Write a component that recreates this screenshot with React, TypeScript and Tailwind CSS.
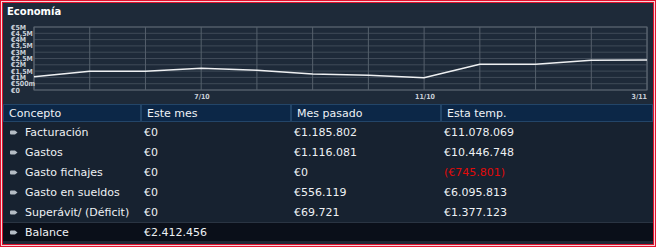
import React from 'react';

const FONT = { fontFamily: '"DejaVu Sans", Verdana, sans-serif' };

const yLabels = ['€5M', '€4,5M', '€4M', '€3,5M', '€3M', '€2,5M', '€2M', '€1,5M', '€1M', '€500m', '€0'];

// page coords of the line, measured off the chart
const points: [number, number][] = [
  [34, 76.7], [89.7, 71.3], [145.5, 71.3], [201.2, 68.3], [257, 70.3], [312.6, 74],
  [368.4, 75.3], [424, 77.7], [479.8, 64.3], [535.6, 64.3], [591.3, 60.3], [647, 60],
];

const rows = [
  { label: 'Facturación', mes: '€0', pasado: '€1.185.802', temp: '€11.078.069' },
  { label: 'Gastos', mes: '€0', pasado: '€1.116.081', temp: '€10.446.748' },
  { label: 'Gasto fichajes', mes: '€0', pasado: '€0', temp: '(€745.801)', neg: true },
  { label: 'Gasto en sueldos', mes: '€0', pasado: '€556.119', temp: '€6.095.813' },
  { label: 'Superávit/ (Déficit)', mes: '€0', pasado: '€69.721', temp: '€1.377.123' },
];

const Bullet = () => (
  <svg width="8" height="5" viewBox="0 0 8 5" className="shrink-0">
    <path d="M0 1.5 Q0 0.5 1 0.5 L5 0.5 L7.5 2.5 L5 4.5 L1 4.5 Q0 4.5 0 3.5 Z" fill="#b4bcc4" />
  </svg>
);

const Chart = () => {
  const x0 = 31, step = 55.73, top = 5, rowH = 6.3;
  return (
    <svg width="650" height="80" className="block">
      {Array.from({ length: 11 }).map((_, j) => (
        <line key={'h' + j} x1={x0} x2={x0 + 11 * step} y1={top + j * rowH} y2={top + j * rowH} stroke="#3f4a58" strokeWidth="1" />
      ))}
      {Array.from({ length: 12 }).map((_, i) => (
        <line key={'v' + i} x1={x0 + i * step} x2={x0 + i * step} y1={top} y2={top + 10 * rowH} stroke="#55606c" strokeWidth="1" />
      ))}
      <rect x={x0} y={top} width={11 * step} height={10 * rowH} fill="none" stroke="#5a6470" strokeWidth="1" />
      {yLabels.map((l, j) => (
        <text key={l} x="8" y={top + j * rowH + 2.5} fontSize="7" fontWeight="bold" fill="#c9d0d8" style={{ fontFamily: '"DejaVu Sans Condensed", "DejaVu Sans", sans-serif' }}>{l}</text>
      ))}
      <polyline points={points.map(([x, y]) => `${x - 3},${y - 22}`).join(' ')} fill="none" stroke="#eef0f2" strokeWidth="1.6" />
      {[['7/10', 199, 'middle'], ['11/10', 422, 'middle'], ['3/11', 644, 'end']].map(([t, x, a]) => (
        <text key={t as string} x={x as number} y="77" fontSize="7" fontWeight="bold" textAnchor={a as 'middle' | 'end'} fill="#c9d0d8" style={{ fontFamily: '"DejaVu Sans Condensed", "DejaVu Sans", sans-serif' }}>{t}</text>
      ))}
    </svg>
  );
};

const HeadCell = ({ children }: any) => (
  <div className="h-[18px] flex items-center pl-[5px] bg-[#0c2747] border border-[#234568] text-[#eef2f6]">{children}</div>
);

export default function App() {
  return (
    <div className="w-[656px] h-[247px] border border-[#e0132f] bg-[#f3d6da]" style={FONT}>
      <div className="w-full h-full p-px">
        <div className="w-full h-full border border-[#e0132f] bg-[#1e2a39] flex flex-col">
          <div className="h-[19px] flex items-center pl-[4px] pb-[2px] text-white font-bold text-[10px] leading-none">Economía</div>
          <Chart />
          <div className="pt-[2px] text-[11px] leading-none">
            <div className="grid grid-cols-[138px_150px_150px_1fr] bg-[#0a1522]">
              <HeadCell>Concepto</HeadCell>
              <HeadCell>Este mes</HeadCell>
              <HeadCell>Mes pasado</HeadCell>
              <HeadCell>Esta temp.</HeadCell>
            </div>
            <div className="bg-[#172230] text-[#eef1f4]">
              {rows.map((r) => (
                <div key={r.label} className="grid grid-cols-[138px_150px_150px_1fr] h-[20px] items-center pt-px">
                  <div className="flex items-center gap-[7px] pl-[7px]"><Bullet />{r.label}</div>
                  <div className="pl-[3px]">{r.mes}</div>
                  <div className="pl-[3px]">{r.pasado}</div>
                  <div className="pl-[3px]" style={r.neg ? { color: '#e00a0a' } : undefined}>{r.temp}</div>
                </div>
              ))}
            </div>
            <div className="grid grid-cols-[138px_150px_150px_1fr] h-[20px] items-center bg-[#0a0f19] border-t border-[#2a3442] border-b border-b-[#202a36] text-[#eef1f4]">
              <div className="flex items-center gap-[7px] pl-[7px]"><Bullet />Balance</div>
              <div className="pl-[3px]">€2.412.456</div>
              <div />
              <div />
            </div>
          </div>
        </div>
      </div>
    </div>
  );
}
